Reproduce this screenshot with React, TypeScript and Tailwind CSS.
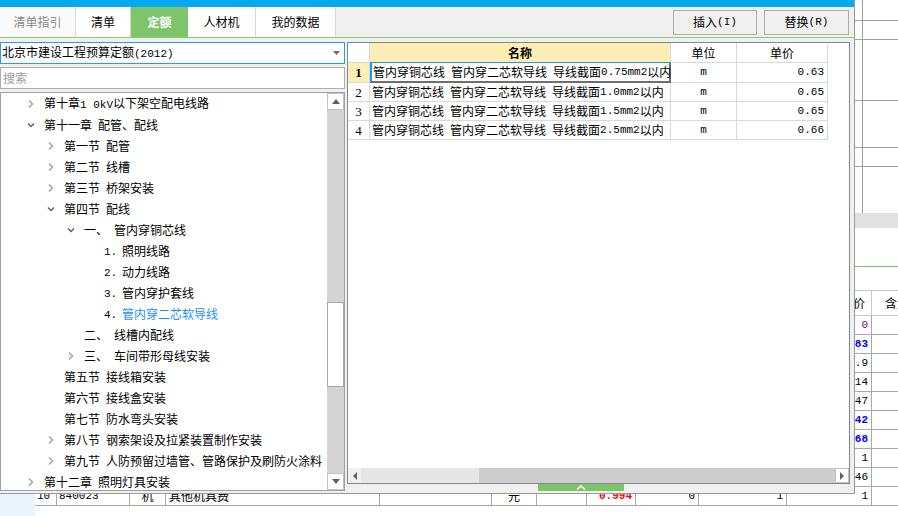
import React from 'react';

type TreeItem = {
    level: 0 | 1 | 2 | 3;
    text: React.ReactNode;
    arrow?: 'right' | 'down';
    num?: string;
    active?: boolean;
};

const S = '\u2002';

// half-width latin text, narrow like the bitmap font of the original
const M = ({ children }: { children: React.ReactNode }) => (
    <span className="font-['Liberation_Mono',monospace] text-[11px]">{children}</span>
);

const treeItems: TreeItem[] = [
    { level: 0, arrow: 'right', text: <>第十章<M>1 0kV</M>以下架空配电线路</> },
    { level: 0, arrow: 'down', text: `第十一章${S}配管、配线` },
    { level: 1, arrow: 'right', text: `第一节${S}配管` },
    { level: 1, arrow: 'right', text: `第二节${S}线槽` },
    { level: 1, arrow: 'right', text: `第三节${S}桥架安装` },
    { level: 1, arrow: 'down', text: `第四节${S}配线` },
    { level: 2, arrow: 'down', num: '一、', text: '管内穿铜芯线' },
    { level: 3, num: '1.', text: '照明线路' },
    { level: 3, num: '2.', text: '动力线路' },
    { level: 3, num: '3.', text: '管内穿护套线' },
    { level: 3, num: '4.', text: '管内穿二芯软导线', active: true },
    { level: 2, num: '二、', text: '线槽内配线' },
    { level: 2, arrow: 'right', num: '三、', text: '车间带形母线安装' },
    { level: 1, text: `第五节${S}接线箱安装` },
    { level: 1, text: `第六节${S}接线盒安装` },
    { level: 1, text: `第七节${S}防水弯头安装` },
    { level: 1, arrow: 'right', text: `第八节${S}钢索架设及拉紧装置制作安装` },
    { level: 1, arrow: 'right', text: `第九节${S}人防预留过墙管、管路保护及刷防火涂料` },
    { level: 0, arrow: 'right', text: `第十二章${S}照明灯具安装` },
];

const indent = ['pl-[26px]', 'pl-[46px]', 'pl-[66px]', 'pl-[86px]'];

const quotaRows = [
    { n: '1', size: '0.75mm2', unit: 'm', price: '0.63' },
    { n: '2', size: '1.0mm2', unit: 'm', price: '0.65' },
    { n: '3', size: '1.5mm2', unit: 'm', price: '0.65' },
    { n: '4', size: '2.5mm2', unit: 'm', price: '0.66' },
];

const bgRows = [
    { price: '0', cls: 'text-[#800080]' },
    { price: '1.83', cls: 'text-[#0000ff] font-bold' },
    { price: '13.9', cls: 'text-black' },
    { price: '14', cls: 'text-black' },
    { price: '47', cls: 'text-black' },
    { price: '0.42', cls: 'text-[#0000ff] font-bold' },
    { price: '0.68', cls: 'text-[#0000ff] font-bold' },
    { price: '1', cls: 'text-black' },
    { price: '46', cls: 'text-black' },
];

const Chevron = ({ dir }: { dir: 'right' | 'down' }) =>
    dir === 'right' ? (
        <svg width="8" height="10" viewBox="0 0 8 10">
            <path d="M2 1.5 L5.5 5 L2 8.5" fill="none" stroke="#a8a8a8" strokeWidth="1.6" />
        </svg>
    ) : (
        <svg width="8" height="8" viewBox="0 0 8 8">
            <path d="M1 2.5 L4 5.5 L7 2.5" fill="none" stroke="#606060" strokeWidth="1.5" />
        </svg>
    );

const Tree = () => (
    <div className="flex h-[399px] border border-[#a0a0a0] bg-white">
        <div className="flex-1 overflow-hidden">
            {treeItems.map((item, i) => (
                <div key={i} className={`flex h-[21px] items-center leading-none whitespace-pre ${indent[item.level]}`}>
                    <span className="flex w-[17px] shrink-0 items-center">{item.arrow && <Chevron dir={item.arrow} />}</span>
                    {item.num && (
                        <span className={item.level === 3 ? 'w-[18px] shrink-0 text-black' : 'w-[30px] shrink-0 text-black'}>
                            {item.level === 3 ? <M>{item.num}</M> : item.num}
                        </span>
                    )}
                    <span className={item.active ? 'text-[#1890ff]' : 'text-black'}>{item.text}</span>
                </div>
            ))}
        </div>
        <div className="flex w-[17px] flex-col bg-[#d4d4d4]">
            <div className="flex h-[17px] items-center justify-center border border-[#c2c2c2] bg-white">
                <svg width="8" height="5" viewBox="0 0 8 5">
                    <path d="M0 5 L4 0 L8 5 Z" fill="#606060" />
                </svg>
            </div>
            <div className="h-[192px]" />
            <div className="h-[85px] border border-[#a8a8a8] bg-white" />
            <div className="flex-1" />
            <div className="flex h-[17px] items-center justify-center border border-[#c2c2c2] bg-white">
                <svg width="8" height="5" viewBox="0 0 8 5">
                    <path d="M0 0 L8 0 L4 5 Z" fill="#606060" />
                </svg>
            </div>
        </div>
    </div>
);

const QuotaTable = () => (
    <div className="flex h-[442px] w-[503px] flex-col border border-[#828790] bg-white">
        <div className="flex h-[20px] leading-none">
            <div className="w-[22px] border-r border-b border-[#d9d9d9]" />
            <div className="flex w-[301px] items-center justify-center border-r border-r-[#d9d9d9] border-b border-b-[#1e9be0] bg-[#fdeeb5] font-bold">名称</div>
            <div className="flex w-[66px] items-center justify-center border-r border-b border-[#d9d9d9]">单位</div>
            <div className="flex w-[91px] items-center justify-center border-r border-b border-[#d9d9d9]">单价</div>
        </div>
        {quotaRows.map((row, i) => {
            const name = (
                <>
                    管内穿铜芯线{S}管内穿二芯软导线{S}导线截面<M>{row.size}</M>以内
                </>
            );
            return (
                <div key={row.n} className={`flex leading-none whitespace-pre ${i === 0 ? 'h-[20px]' : 'h-[19px]'}`}>
                    <div
                        className={`flex w-[22px] items-center justify-center border-r border-b border-[#d9d9d9] font-['Liberation_Serif',serif] text-[13px] ${
                            i === 0 ? 'bg-[#fdeeb5] font-bold' : ''
                        }`}
                    >
                        {row.n}
                    </div>
                    {i === 0 ? (
                        <div className="flex w-[301px] items-center border-l-2 border-l-[#1e9be0] border-r-2 border-r-[#6e6e6e] border-b-2 border-b-[#6e6e6e] pl-[1px]">
                            {name}
                        </div>
                    ) : (
                        <div className="flex w-[301px] items-center border-r border-b border-[#d9d9d9] pl-[2px]">{name}</div>
                    )}
                    <div className="flex w-[66px] items-center justify-center border-r border-b border-[#d9d9d9]">
                        <M>{row.unit}</M>
                    </div>
                    <div className="flex w-[91px] items-center justify-end border-r border-b border-[#d9d9d9] pr-[3px]">
                        <M>{row.price}</M>
                    </div>
                </div>
            );
        })}
        <div className="flex-1" />
        <div className="flex h-[15px]">
            <div className="flex w-[13px] items-center justify-center bg-[#f0f0f0]">
                <svg width="4" height="8" viewBox="0 0 4 8">
                    <path d="M4 0 L0 4 L4 8 Z" fill="#606060" />
                </svg>
            </div>
            <div className="w-[118px] bg-[#e6e6e6]" />
            <div className="flex-1 bg-[#cdcdcd]" />
            <div className="flex w-[14px] items-center justify-center border border-[#c2c2c2] bg-white">
                <svg width="4" height="8" viewBox="0 0 4 8">
                    <path d="M0 0 L4 4 L0 8 Z" fill="#606060" />
                </svg>
            </div>
        </div>
    </div>
);

const Dialog = () => (
    <div className="flex h-[494px] w-[855px] flex-col border-r border-b border-[#9a9a9a] bg-[#f0f0f0]">
        <div className="h-[7px] bg-[#06a8ee]" />
        <div className="flex h-[31px] items-center border-b border-[#8dcb78] leading-none">
            <div className="flex h-full text-[12px]">
                <div className="flex w-[76px] items-center justify-center border-r border-[#c6e4bb] bg-[#fafafa] text-[#8a8a8a]">清单指引</div>
                <div className="flex w-[55px] items-center justify-center border-r border-[#c6e4bb] bg-white">清单</div>
                <div className="flex w-[57px] items-center justify-center bg-[#7dc46a] font-bold text-white">定额</div>
                <div className="flex w-[68px] items-center justify-center border-r border-[#c6e4bb] bg-white">人材机</div>
                <div className="flex w-[80px] items-center justify-center border-r border-[#c6e4bb] bg-white">我的数据</div>
            </div>
            <div className="mr-[5px] ml-auto flex gap-[7px]">
                <button className="flex h-[25px] w-[84px] items-center justify-center border border-[#adadad] bg-[#f0f0f0]">
                    插入<M>(I)</M>
                </button>
                <button className="flex h-[25px] w-[85px] items-center justify-center border border-[#adadad] bg-[#f0f0f0]">
                    替换<M>(R)</M>
                </button>
            </div>
        </div>
        <div className="flex gap-[2px] pt-[4px]">
            <div className="flex w-[345px] flex-col gap-[3px]">
                <div className="flex h-[22px] items-center border border-[#26a0da] bg-white pr-[4px] pl-[1px] leading-none">
                    <span className="flex-1">
                        北京市建设工程预算定额<M>(2012)</M>
                    </span>
                    <svg width="7" height="4" viewBox="0 0 7 4">
                        <path d="M0 0 H7 L3.5 4 Z" fill="#6d6d6d" />
                    </svg>
                </div>
                <div className="flex h-[22px] items-center border border-[#abadb3] bg-white pl-[2px] leading-none text-[#a0a0a0]">搜索</div>
                <Tree />
            </div>
            <div className="flex flex-col">
                <QuotaTable />
                <div className="ml-[191px] flex h-[7px] w-[86px] items-center justify-center bg-[#7cc468]">
                    <svg width="10" height="5" viewBox="0 0 10 5">
                        <path d="M1 4.5 L5 1 L9 4.5" fill="none" stroke="#ffffff" strokeWidth="1.5" />
                    </svg>
                </div>
            </div>
        </div>
    </div>
);

const bgCols = ['w-[22px]', 'w-[73px]', 'w-[36px]', 'w-[214px]', 'w-[112px]', 'w-[45px]', 'w-[50px]', 'w-[49px]', 'w-[63px]', 'w-[88px]', 'w-[85px]'];

const lastRow = ['10', '840023', '机', '其他机具费', '', '元', '', '0.994', '0', '1', '1'];
const lastAlign = [
    'justify-start pl-[2px]',
    'justify-start pl-[2px]',
    'justify-center',
    'justify-start pl-[3px]',
    'justify-start',
    'justify-center',
    'justify-start',
    'justify-end pr-[3px] font-bold text-[#ff0000]',
    'justify-end pr-[3px]',
    'justify-end pr-[3px]',
    'justify-end pr-[3px]',
];

const topRows = ['h-[21px]', 'h-[19px]', 'h-[61px]', 'h-[47px]', 'h-[19px]'];

const Background = () => (
    <div className="flex h-[516px] w-[898px] flex-col">
        {topRows.map((h, i) => (
            <div key={i} className={`flex border-b border-[#a0a0a0] ${h}`}>
                <div className="w-[863px] shrink-0 border-r border-[#a0a0a0]" />
            </div>
        ))}
        <div className="flex h-[46px]">
            <div className="w-[863px] shrink-0 border-r border-[#a0a0a0]" />
        </div>
        <div className="h-[15px] bg-[#e1e1e1]" />
        <div className="h-[38px]" />
        <div className="h-px bg-[#7cc66a]" />
        <div className="h-[23px]" />
        <div className="flex flex-1">
            <div className="w-[35px] shrink-0 bg-[#e9f4fc]" />
            <div className="flex min-w-0 flex-1 flex-col leading-none">
                <div className="flex h-[26px] border-y border-[#c8c8c8]">
                    {bgCols.map((w, c) => (
                        <div key={c} className={`flex shrink-0 items-center justify-end border-r border-[#c8c8c8] pr-[6px] ${w}`}>
                            {c === 10 ? '单价' : ''}
                        </div>
                    ))}
                    <div className="flex min-w-0 flex-1 items-center overflow-hidden pl-[13px] whitespace-nowrap">含量</div>
                </div>
                {bgRows.map((r, i) => (
                    <div key={i} className="flex h-[19px] border-b border-[#a8a8a8]">
                        {bgCols.map((w, c) => (
                            <div key={c} className={`flex shrink-0 items-center justify-end border-r border-[#a8a8a8] pr-[3px] ${w} ${c === 10 ? r.cls : ''}`}>
                                {c === 10 ? <M>{r.price}</M> : ''}
                            </div>
                        ))}
                        <div className="min-w-0 flex-1" />
                    </div>
                ))}
                <div className="flex h-[19px] border-b border-[#a8a8a8]">
                    {bgCols.map((w, c) => (
                        <div key={c} className={`flex shrink-0 items-center border-r border-[#a8a8a8] ${w} ${lastAlign[c]}`}>
                            {/^[\d.]+$/.test(lastRow[c]) ? <M>{lastRow[c]}</M> : lastRow[c]}
                        </div>
                    ))}
                    <div className="min-w-0 flex-1" />
                </div>
            </div>
        </div>
    </div>
);

export default function App() {
    return (
        <div className="relative h-[516px] w-[898px] overflow-hidden bg-white font-['Noto_Sans_CJK_SC',sans-serif] text-[12px] text-black">
            <Background />
            <div className="absolute top-0 left-0 z-10">
                <Dialog />
            </div>
        </div>
    );
}
